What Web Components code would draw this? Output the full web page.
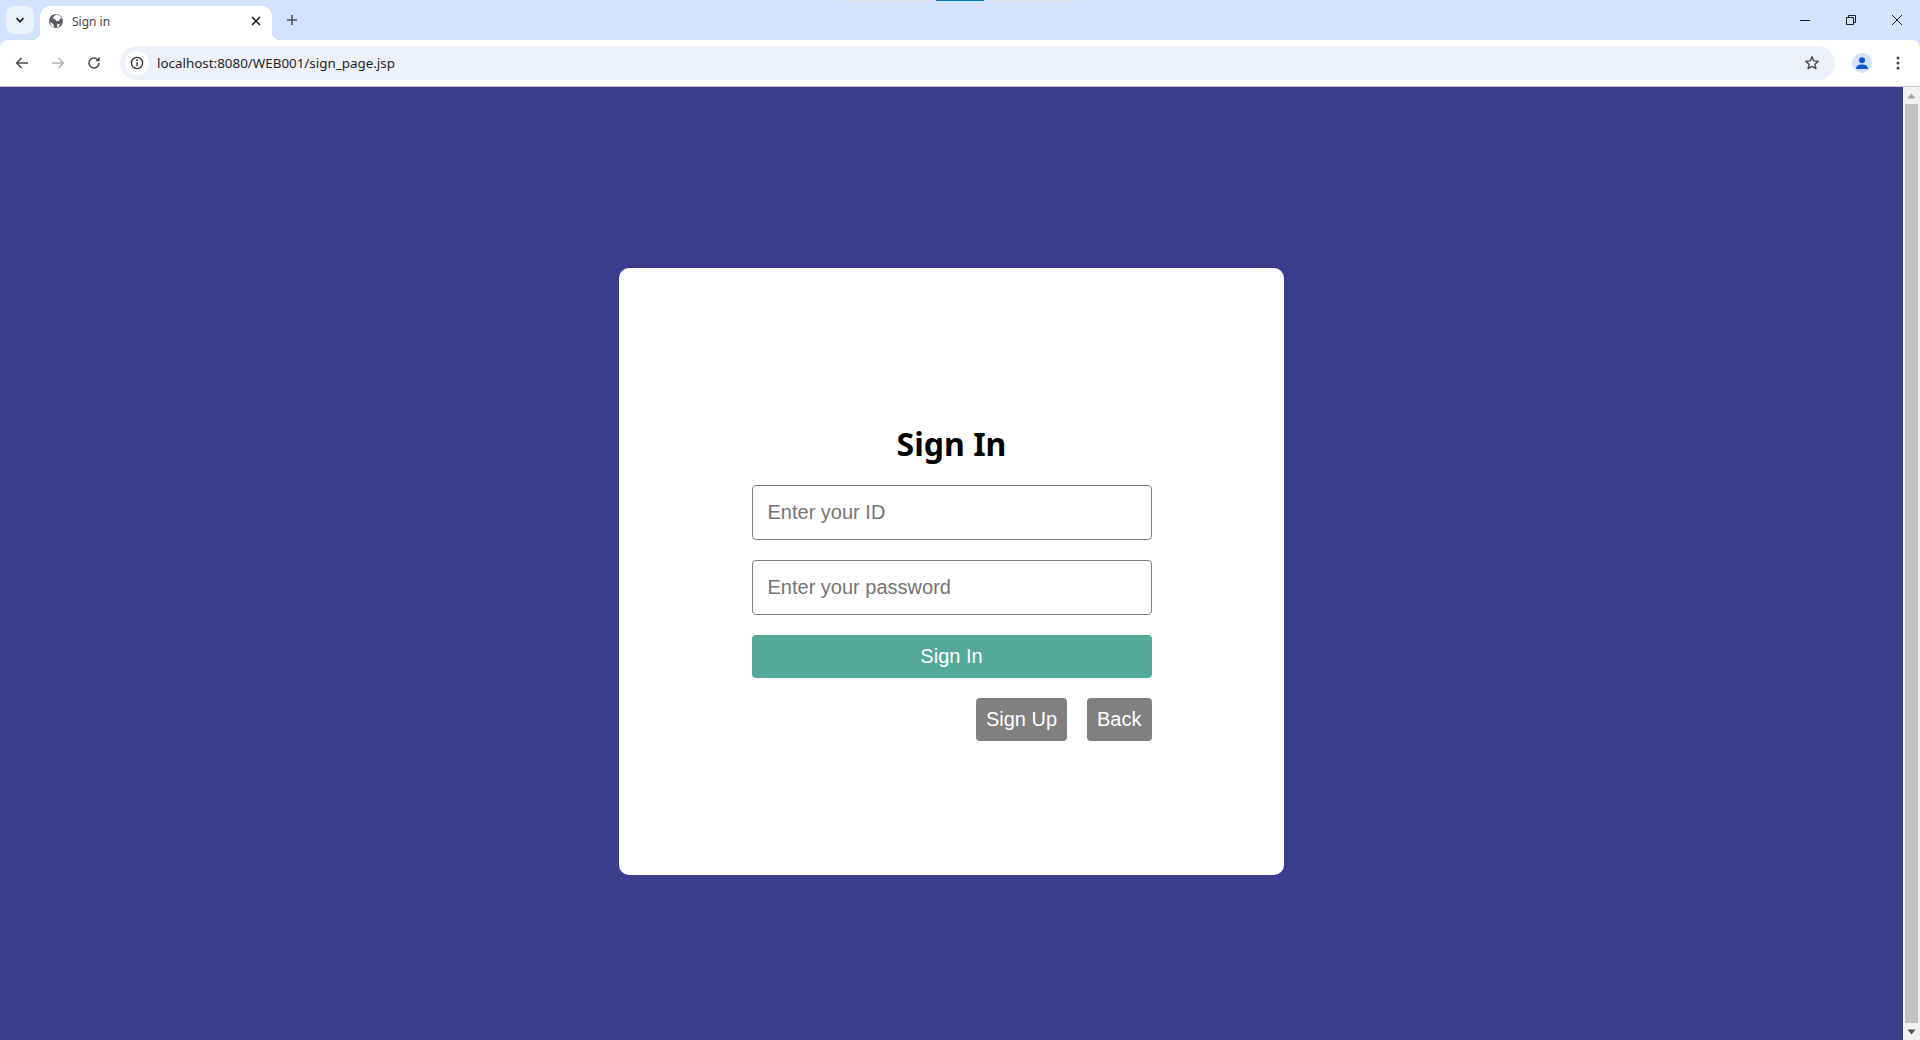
<!DOCTYPE html>
<html lang="en">
<head>
<meta charset="utf-8">
<title>Sign in</title>
<style>
    html, body { margin: 0; height: 100%; overflow: hidden; }
    body { display: flex; flex-direction: column; height: 1040px; }
</style>
</head>
<body>
<browser-tabs title-text="Sign in"></browser-tabs>
<browser-toolbar url="localhost:8080/WEB001/sign_page.jsp"></browser-toolbar>
<page-view>
    <login-card heading="Sign In">
        <text-field placeholder="Enter your ID"></text-field>
        <text-field placeholder="Enter your password" type="password"></text-field>
        <action-button kind="primary" wide>Sign In</action-button>
        <div slot="links">
            <action-button>Sign Up</action-button>
            <action-button>Back</action-button>
        </div>
    </login-card>
</page-view>

<script>
class BrowserTabs extends HTMLElement {
    constructor() {
        super();
        this.shadowDOM = this.attachShadow({ mode: "open" });
    }

    connectedCallback() {
        this.shadowDOM.innerHTML = `
            <style>
                :host {
                    display: flex;
                    position: relative;
                    flex: none;
                    height: 40px;
                    box-sizing: border-box;
                    padding: 6px 0 0 6px;
                    background-color: #d3e3fd;
                    font-family: "Noto Sans", sans-serif;
                }

                .strip {
                    position: absolute;
                    top: 0;
                    left: 840px;
                    display: flex;
                    gap: 1px;
                    height: 1px;
                }

                .strip i { width: 95px; background-color: #dcdcdc; }
                .strip i.on { width: 48px; background-color: #0078d4; }

                .search {
                    display: flex;
                    align-items: center;
                    justify-content: center;
                    width: 28px;
                    height: 28px;
                    border-radius: 8px;
                    background-color: #ecf2fc;
                }

                .tab {
                    position: relative;
                    display: flex;
                    align-items: center;
                    width: 232px;
                    height: 34px;
                    box-sizing: border-box;
                    margin-left: 6px;
                    padding: 0 8px 5px 8px;
                    background-color: white;
                    border-radius: 10px 10px 0 0;
                }

                .tab::before, .tab::after {
                    content: "";
                    position: absolute;
                    bottom: 0;
                    width: 8px;
                    height: 8px;
                }

                .tab::before {
                    left: -8px;
                    background: radial-gradient(circle at 0 0, transparent 8px, white 8.5px);
                }

                .tab::after {
                    right: -8px;
                    background: radial-gradient(circle at 100% 0, transparent 8px, white 8.5px);
                }

                .title {
                    flex: 1;
                    margin-left: 8px;
                    font-size: 12px;
                    color: #45474a;
                    margin-top: 1px;
                }

                .close { display: block; }

                .new {
                    display: block;
                    margin: 6px 0 0 12px;
                }

                .window {
                    display: flex;
                    margin-left: auto;
                    margin-top: -6px;
                }

                .window span {
                    display: flex;
                    align-items: center;
                    justify-content: center;
                    width: 46px;
                    height: 40px;
                }
            </style>

            <div class="strip"><i></i><i class="on"></i><i></i></div>

            <div class="search">
                <svg width="12" height="12" viewBox="0 0 12 12"><path d="M2.5 4.2 6 7.7l3.5-3.5" fill="none" stroke="#1f2937" stroke-width="1.7"/></svg>
            </div>

            <div class="tab">
                <svg width="16" height="16" viewBox="0 0 16 16">
                    <circle cx="8" cy="8" r="7" fill="#5b5e66"/>
                    <path d="M8.5 1.6 6 3 4.8 5.2l2.4 1 1.3 1.8 2.4.1 1.4-2.6 1.6.3C13 3.4 11 1.9 8.5 1.6zM2 9l3 1.7.9 2.1-.4 1.6C3.7 13.5 2.4 11.5 2 9zM9.5 11l2.4.2-1.4 2.6-1.7.6z" fill="white"/>
                </svg>
                <span class="title">${this.getAttribute("title-text")}</span>
                <svg class="close" width="16" height="16" viewBox="0 0 16 16"><path d="M4 4l8 8M12 4l-8 8" stroke="#2a2c30" stroke-width="1.6" fill="none"/></svg>
            </div>

            <svg class="new" width="16" height="16" viewBox="0 0 16 16"><path d="M8 3v10M3 8h10" stroke="#4a4d52" stroke-width="1.5" fill="none"/></svg>

            <div class="window">
                <span><svg width="12" height="12" viewBox="0 0 12 12"><path d="M1 6.5h10" stroke="#1c1c1c" fill="none"/></svg></span>
                <span><svg width="12" height="12" viewBox="0 0 12 12"><path d="M1.5 3.5h7v7h-7zM3.5 3.5v-2h7v7h-2" stroke="#1c1c1c" fill="none"/></svg></span>
                <span><svg width="12" height="12" viewBox="0 0 12 12"><path d="M1 1l10 10M11 1L1 11" stroke="#1c1c1c" fill="none"/></svg></span>
            </div>
        `;
    }
}

class BrowserToolbar extends HTMLElement {
    constructor() {
        super();
        this.shadowDOM = this.attachShadow({ mode: "open" });
    }

    connectedCallback() {
        this.shadowDOM.innerHTML = `
            <style>
                :host {
                    display: flex;
                    align-items: center;
                    flex: none;
                    position: relative;
                    height: 47px;
                    box-sizing: border-box;
                    padding: 0 14px 1px 4px;
                    background-color: #d3e3fd;
                    font-family: "Noto Sans", sans-serif;
                }

                .bar {
                    position: absolute;
                    inset: 0;
                    background-color: white;
                    border-radius: 8px 8px 0 0;
                    border-bottom: 1px solid #c7c7c7;
                    box-sizing: border-box;
                }

                .row {
                    position: relative;
                    display: flex;
                    align-items: center;
                    width: 100%;
                }

                .nav {
                    display: flex;
                    align-items: center;
                    justify-content: center;
                    flex: none;
                    width: 36px;
                    height: 34px;
                }

                .omnibox {
                    display: flex;
                    align-items: center;
                    flex: 1;
                    height: 34px;
                    margin-left: 8px;
                    padding: 0 15px 0 5px;
                    border-radius: 17px;
                    background-color: #edf2fa;
                }

                .chip {
                    display: flex;
                    align-items: center;
                    justify-content: center;
                    width: 24px;
                    height: 24px;
                    border-radius: 50%;
                    background-color: white;
                }

                .url {
                    flex: 1;
                    margin-left: 8px;
                    font-size: 13.4px;
                    color: #1f1f1f;
                }

                .profile {
                    display: flex;
                    align-items: center;
                    justify-content: center;
                    width: 20px;
                    height: 20px;
                    margin: 0 18px 0 17px;
                    border-radius: 50%;
                    background-color: #d3e3fd;
                }
            </style>

            <div class="bar"></div>
            <div class="row">
                <span class="nav"><svg width="16" height="16" viewBox="0 0 16 16"><path d="M14 8H3M7.5 3 2.7 8l4.8 5" fill="none" stroke="#474a4f" stroke-width="1.5"/></svg></span>
                <span class="nav"><svg width="16" height="16" viewBox="0 0 16 16"><path d="M2 8h11M8.5 3l4.8 5-4.8 5" fill="none" stroke="#b0b2b5" stroke-width="1.5"/></svg></span>
                <span class="nav"><svg width="16" height="16" viewBox="0 0 16 16"><path d="M13 8a5 5 0 1 1-1.6-3.7" fill="none" stroke="#474a4f" stroke-width="1.5"/><path d="M13.6 1.8v4.4H9.2z" fill="#474a4f"/></svg></span>

                <div class="omnibox">
                    <span class="chip"><svg width="14" height="14" viewBox="0 0 14 14"><circle cx="7" cy="7" r="5.6" fill="none" stroke="#2a2c30" stroke-width="1.3"/><path d="M7 6.2v4" stroke="#2a2c30" stroke-width="1.4"/><circle cx="7" cy="4.2" r=".9" fill="#2a2c30"/></svg></span>
                    <span class="url">${this.getAttribute("url")}</span>
                    <svg width="16" height="16" viewBox="0 0 16 16"><path d="M8 1.8l1.8 4.1 4.5.4-3.4 3 1 4.4L8 11.4l-3.9 2.3 1-4.4-3.4-3 4.5-.4z" fill="none" stroke="#474a4f" stroke-width="1.4" stroke-linejoin="round"/></svg>
                </div>

                <span class="profile"><svg width="14" height="14" viewBox="0 0 14 14"><circle cx="7" cy="4.2" r="3" fill="#0b57d0"/><path d="M1 13c0-3 2.7-4.4 6-4.4s6 1.4 6 4.4z" fill="#0b57d0"/></svg></span>
                <svg width="16" height="16" viewBox="0 0 16 16"><circle cx="8" cy="3" r="1.5" fill="#474a4f"/><circle cx="8" cy="8" r="1.5" fill="#474a4f"/><circle cx="8" cy="13" r="1.5" fill="#474a4f"/></svg>
            </div>
        `;
    }
}

class PageView extends HTMLElement {
    constructor() {
        super();
        this.shadowDOM = this.attachShadow({ mode: "open" });
    }

    connectedCallback() {
        this.shadowDOM.innerHTML = `
            <style>
                :host {
                    display: flex;
                    flex: 1;
                    min-height: 0;
                }

                .content {
                    flex: 1;
                    display: flex;
                    justify-content: center;
                    align-items: flex-start;
                    padding-top: 181px;
                    background-color: #3c3c8c;
                }

                .scrollbar {
                    display: flex;
                    flex-direction: column;
                    flex: none;
                    width: 17px;
                    background-color: #f1f1f1;
                }

                .arrow {
                    display: flex;
                    align-items: center;
                    justify-content: center;
                    flex: none;
                    height: 17px;
                }

                .thumb {
                    flex: 1;
                    margin: 0 2px;
                    background-color: #c1c1c1;
                }
            </style>

            <div class="content"><slot></slot></div>
            <div class="scrollbar">
                <span class="arrow"><svg width="9" height="6" viewBox="0 0 9 6"><path d="M0.5 5.5h8L4.5.5z" fill="#a3a3a3"/></svg></span>
                <div class="thumb"></div>
                <span class="arrow"><svg width="9" height="6" viewBox="0 0 9 6"><path d="M0.5.5h8L4.5 5.5z" fill="#505050"/></svg></span>
            </div>
        `;
    }
}

class LoginCard extends HTMLElement {
    constructor() {
        super();
        this.shadowDOM = this.attachShadow({ mode: "open" });
    }

    connectedCallback() {
        this.shadowDOM.innerHTML = `
            <style>
                :host {
                    display: flex;
                    flex-direction: column;
                    justify-content: center;
                    width: 665px;
                    height: 607px;
                    box-sizing: border-box;
                    padding: 18px 132.5px 0;
                    background-color: white;
                    border-radius: 10px;
                }

                h1 {
                    margin: 0 0 17px;
                    text-align: center;
                    font-family: "Noto Sans", sans-serif;
                    font-size: 32px;
                    font-weight: 700;
                    line-height: 48px;
                    color: black;
                }

                .form {
                    display: flex;
                    flex-direction: column;
                    gap: 20px;
                }

                ::slotted([slot="links"]) {
                    display: flex;
                    justify-content: flex-end;
                    gap: 20px;
                }
            </style>

            <h1>${this.getAttribute("heading")}</h1>
            <div class="form">
                <slot></slot>
                <slot name="links"></slot>
            </div>
        `;
    }
}

class TextField extends HTMLElement {
    constructor() {
        super();
        this.shadowDOM = this.attachShadow({ mode: "open" });
    }

    connectedCallback() {
        this.shadowDOM.innerHTML = `
            <style>
                :host { display: block; }

                input {
                    display: block;
                    width: 100%;
                    height: 55px;
                    box-sizing: border-box;
                    padding: 0 15px;
                    border: 1px solid #7d7d7d;
                    border-radius: 4px;
                    background-color: white;
                    font-family: "Liberation Sans", Arial, sans-serif;
                    font-size: 20px;
                    outline: none;
                }

                input::placeholder { color: #757575; opacity: 1; }
            </style>

            <input type="${this.getAttribute("type") || "text"}" placeholder="${this.getAttribute("placeholder")}">
        `;
    }
}

class ActionButton extends HTMLElement {
    constructor() {
        super();
        this.shadowDOM = this.attachShadow({ mode: "open" });
    }

    connectedCallback() {
        this.shadowDOM.innerHTML = `
            <style>
                :host { display: block; }

                button {
                    display: block;
                    width: 100%;
                    height: 43px;
                    padding: 0 10px;
                    border: none;
                    border-radius: 4px;
                    background-color: #808080;
                    color: white;
                    font-family: "Liberation Sans", Arial, sans-serif;
                    font-size: 20px;
                }

                :host([kind="primary"]) button { background-color: #55a999; }
            </style>

            <button><slot></slot></button>
        `;
    }
}

customElements.define("browser-tabs", BrowserTabs);
customElements.define("browser-toolbar", BrowserToolbar);
customElements.define("page-view", PageView);
customElements.define("login-card", LoginCard);
customElements.define("text-field", TextField);
customElements.define("action-button", ActionButton);
</script>
</body>
</html>
